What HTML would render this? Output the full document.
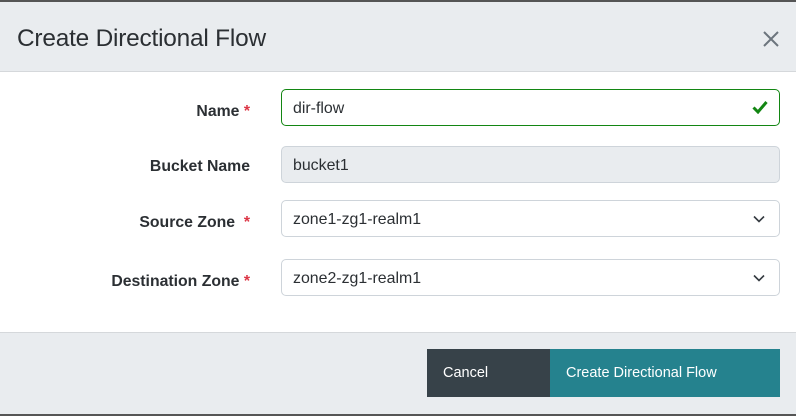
<!DOCTYPE html>
<html><head><style>
*{box-sizing:border-box;margin:0;padding:0}
body{width:796px;height:416px;background:#fff;font-family:"Liberation Sans","DejaVu Sans",sans-serif;color:#333;position:relative;overflow:hidden}
.top{position:absolute;left:0;top:0;width:796px;height:2px;background:#555}
.hdr{position:absolute;left:0;top:2px;width:796px;height:70px;background:#e9ecef;border-bottom:1px solid #d5d8db}
.hdr h1{position:absolute;left:17px;top:23px;font-weight:normal;font-size:24.4px;color:#2b2f33;letter-spacing:-0.2px}
.x{position:absolute;left:762px;top:28px}
.lbl{position:absolute;right:546px;font-weight:bold;font-size:15.8px;color:#2b2f33;text-align:right;white-space:nowrap}
.lbl span{color:#dc3545}
.in{position:absolute;left:281px;width:499px;height:37px;border:1px solid #ced4da;border-radius:5px;font-size:15.9px;padding:10px 0 0 11px;color:#2b2f33}
.ft{position:absolute;left:0;top:332px;width:796px;height:82px;background:#e9ecef;border-top:1px solid #d5d8db}
.bot{position:absolute;left:0;top:414px;width:796px;height:2px;background:#555}
.b{position:absolute;top:349px;height:48px;color:#fff;font-size:14.5px;padding:16px 0 0 16px}
.chev{position:absolute;right:14px;top:14px}
</style></head><body>
<div class="top"></div>
<div class="hdr"><h1>Create Directional Flow</h1>
<svg class="x" width="18" height="18" viewBox="0 0 18 18"><path d="M2 2L16 16M16 2L2 16" stroke="#6c757d" stroke-width="2"/></svg></div>
<div class="lbl" style="top:103px">Name <span>*</span></div>
<div class="in" style="top:89px;border-color:#138613">dir-flow
<svg style="position:absolute;right:11px;top:10px" width="16" height="14" viewBox="0 0 16 14"><path d="M1.5 7.5L6 12L14.5 2" stroke="#138613" stroke-width="3" fill="none"/></svg></div>
<div class="lbl" style="top:158px">Bucket Name</div>
<div class="in" style="top:146px;background:#e9ecef">bucket1</div>
<div class="lbl" style="top:214px">Source Zone &nbsp;<span>*</span></div>
<div class="in" style="top:200px">zone1-zg1-realm1<svg class="chev" width="12" height="8" viewBox="0 0 12 8"><path d="M1 1.5L6 6.5L11 1.5" stroke="#343a40" stroke-width="1.6" fill="none"/></svg></div>
<div class="lbl" style="top:273px">Destination Zone <span>*</span></div>
<div class="in" style="top:259px">zone2-zg1-realm1<svg class="chev" width="12" height="8" viewBox="0 0 12 8"><path d="M1 1.5L6 6.5L11 1.5" stroke="#343a40" stroke-width="1.6" fill="none"/></svg></div>
<div class="ft"></div>
<div class="b" style="left:427px;width:123px;background:#374249">Cancel</div>
<div class="b" style="left:550px;width:230px;background:#25828e">Create Directional Flow</div>
<div class="bot"></div>
</body></html>
